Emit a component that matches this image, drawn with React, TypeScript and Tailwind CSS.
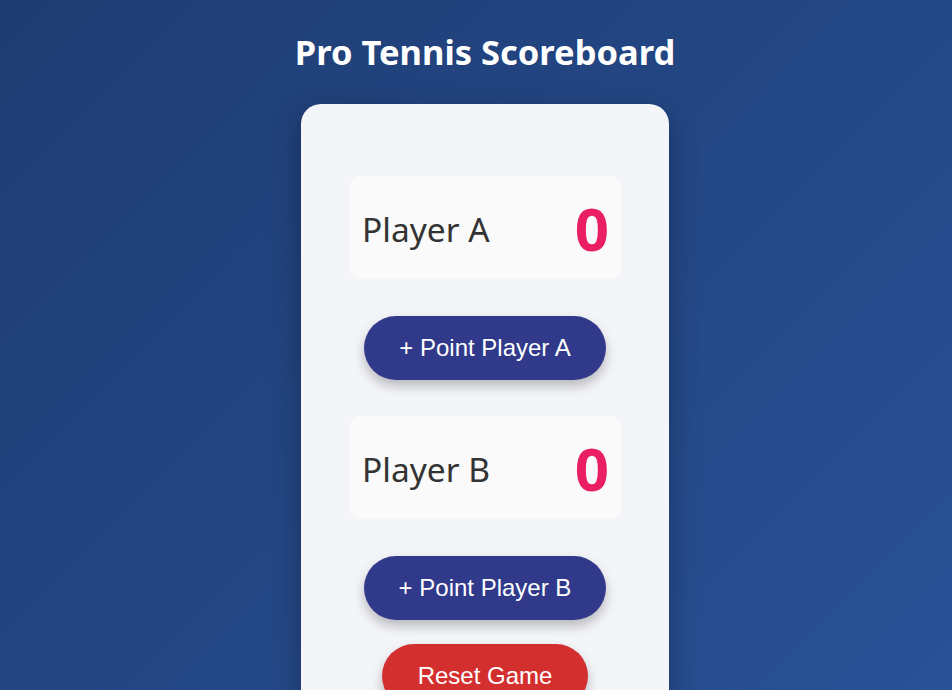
import React, { useState } from "react";

const TENNIS_POINTS = ["0", "15", "30", "40"];

function PlayerRow({ name, score }: { name: string; score: string }) {
  return (
    <div className="flex h-[103px] items-center justify-between rounded-xl bg-[#fafafa] pl-[13px] pr-[12px]">
      <span className="pt-[3px] text-[33.5px] text-[#333333] [font-family:'Noto_Sans',sans-serif]">{name}</span>
      <span className="text-[60px] font-bold leading-none text-[#e91e63] [font-family:'Noto_Sans',sans-serif]">
        {score}
      </span>
    </div>
  );
}

function PointButton({ label, onClick }: { label: string; onClick: () => void }) {
  return (
    <button
      onClick={onClick}
      className="mx-auto flex h-16 items-center rounded-full bg-[#31398a] px-[35px] text-[24px] text-white shadow-[0_6px_12px_rgba(0,0,0,0.25)] [font-family:'Liberation_Sans',Arial,sans-serif]"
    >
      {label}
    </button>
  );
}

export default function App() {
  const [a, setA] = useState(0);
  const [b, setB] = useState(0);

  return (
    <div className="min-h-screen w-full overflow-hidden bg-[linear-gradient(135deg,#1e3c72,#2a5298)] pl-[18px]">
      <div className="flex flex-col items-center">
        <h1 className="mt-[28px] text-[34.5px] font-bold leading-[48px] text-white [font-family:'Noto_Sans',sans-serif]">
          Pro Tennis Scoreboard
        </h1>
        <div className="mt-[28px] w-[368px] rounded-[20px] bg-[#f4f5f9] px-12 pt-[72px] pb-12 shadow-[0_10px_30px_rgba(0,0,0,0.3)]">
          <PlayerRow name="Player A" score={TENNIS_POINTS[Math.min(a, 3)]} />
          <div className="mt-[37px]">
            <PointButton label="+ Point Player A" onClick={() => setA(a + 1)} />
          </div>
          <div className="mt-[36px]">
            <PlayerRow name="Player B" score={TENNIS_POINTS[Math.min(b, 3)]} />
          </div>
          <div className="mt-[37px]">
            <PointButton label="+ Point Player B" onClick={() => setB(b + 1)} />
          </div>
          <div className="mt-6">
            <button
              onClick={() => {
                setA(0);
                setB(0);
              }}
              className="mx-auto flex h-16 items-center rounded-full bg-[#d32f2f] px-9 text-[24px] text-white shadow-[0_6px_12px_rgba(0,0,0,0.25)] [font-family:'Liberation_Sans',Arial,sans-serif]"
            >
              Reset Game
            </button>
          </div>
        </div>
      </div>
    </div>
  );
}
